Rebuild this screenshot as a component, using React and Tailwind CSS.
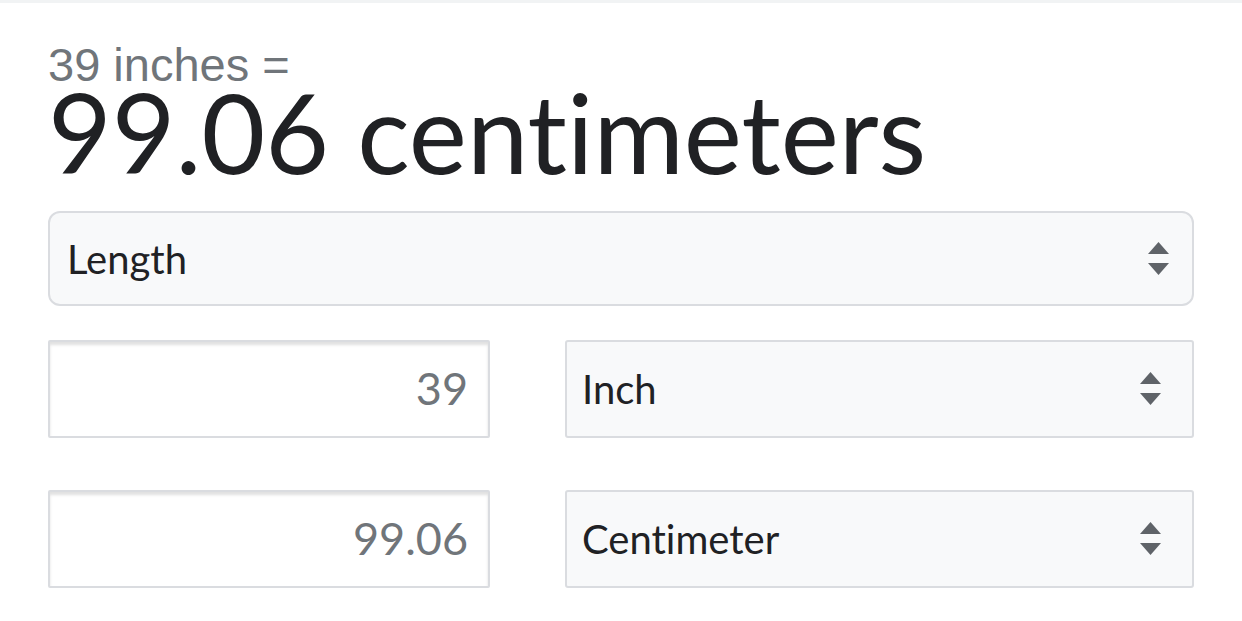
import React from "react";

const gs = { fontFamily: "Lato, 'Open Sans', sans-serif", fontVariantLigatures: "none" };

function Arrows() {
  return (
    <svg width="21" height="34" viewBox="0 0 21 34" className="shrink-0">
      <path d="M10.5 0 L21 12 L0 12 Z" fill="#5f6368" />
      <path d="M0 21 L21 21 L10.5 33 Z" fill="#5f6368" />
    </svg>
  );
}

function UnitSelect({ label }) {
  return (
    <div className="flex-1 h-[98px] flex items-center justify-between bg-[#f8f9fa] border-2 border-[#dadce0] rounded-[3px] pl-[15px] pr-[31px]">
      <span className="text-[40px] text-[#202124]" style={gs}>
        {label}
      </span>
      <Arrows />
    </div>
  );
}

function ValueBox({ value }) {
  return (
    <div className="w-[442px] h-[98px] flex items-center justify-end bg-white border-2 border-[#dadce0] rounded-[2px] pr-[20px] shadow-[inset_0_3px_3px_rgba(0,0,0,0.12)]">
      <span className="text-[45px] text-[#70757a]" style={gs}>
        {value}
      </span>
    </div>
  );
}

export default function App() {
  return (
    <div className="w-[1242px] h-[621px] bg-white border-t-[3px] border-[#f1f3f4] overflow-hidden">
      <div className="px-[48px] pt-[36px]">
        <div
          className="text-[47px] leading-[52px] text-[#70757a]"
          style={{ fontFamily: "'Liberation Sans', Arial, sans-serif" }}
        >
          39 inches =
        </div>
        <div className="text-[110px] leading-[84px] text-[#202124] -mt-[2px]" style={gs}>
          99.06 centimeters
        </div>

        <div className="mt-[38px] h-[95px] flex items-center justify-between bg-[#f8f9fa] border-2 border-[#dadce0] rounded-[12px] pl-[17px] pr-[23px]">
          <span className="text-[40px] text-[#202124]" style={gs}>
            Length
          </span>
          <Arrows />
        </div>

        <div className="mt-[34px] flex flex-col gap-[52px]">
          <div className="flex gap-[75px]">
            <ValueBox value="39" />
            <UnitSelect label="Inch" />
          </div>
          <div className="flex gap-[75px]">
            <ValueBox value="99.06" />
            <UnitSelect label="Centimeter" />
          </div>
        </div>
      </div>
    </div>
  );
}
